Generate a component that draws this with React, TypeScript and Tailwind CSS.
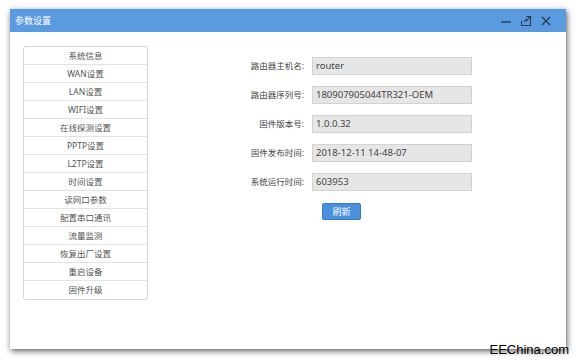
import React from 'react';

const menuItems = [
    '系统信息', 'WAN设置', 'LAN设置', 'WIFI设置', '在线探测设置', 'PPTP设置', 'L2TP设置',
    '时间设置', '读网口参数', '配置串口通讯', '流量监测', '恢复出厂设置', '重启设备', '固件升级',
];

const fields = [
    { label: '路由器主机名:', value: 'router' },
    { label: '路由器序列号:', value: '180907905044TR321-OEM' },
    { label: '固件版本号:', value: '1.0.0.32' },
    { label: '固件发布时间:', value: '2018-12-11 14-48-07' },
    { label: '系统运行时间:', value: '603953' },
];

const font = { fontFamily: '"Noto Sans", "Noto Sans CJK SC", sans-serif' };

export default function App() {
    return (
        <div className="relative w-[576px] h-[361px] bg-white overflow-hidden" style={font}>
            <div className="absolute left-[10px] top-[9px] w-[556px] h-[340px] bg-white shadow-[1px_2px_6px_rgba(0,0,0,0.65)] flex flex-col">
                {/* title bar */}
                <div className="h-[23px] bg-[#5a9ae0] flex items-center justify-between pl-[5px] pr-[14px]">
                    <span className="text-white text-[9px] leading-none">参数设置</span>
                    <div className="flex items-center gap-[8px]">
                        <svg width="12" height="12" viewBox="0 0 12 12">
                            <path d="M1 7h10" stroke="#2f3b4a" strokeWidth="1.4" />
                        </svg>
                        <svg width="12" height="12" viewBox="0 0 12 12" fill="none" stroke="#2f3b4a" strokeWidth="1.1">
                            <path d="M6 1.5h4.5v9h-9V6" />
                            <path d="M10.5 1.5L6 6" />
                            <path d="M6 3.5V6H3.5" />
                        </svg>
                        <svg width="12" height="12" viewBox="0 0 12 12">
                            <path d="M2 2l8 8M10 2l-8 8" stroke="#2f3b4a" strokeWidth="1.3" />
                        </svg>
                    </div>
                </div>

                <div className="flex flex-1">
                    {/* side menu */}
                    <div className="ml-[13px] mt-[14px] w-[125px] self-start border border-[#d6d6d6] rounded-[3px] bg-white">
                        {menuItems.map((item, i) => (
                            <div
                                key={item}
                                className={`h-[18px] pt-[1px] flex items-center justify-center text-[8.5px] text-[#555] ${i < menuItems.length - 1 ? 'border-b border-[#e2e2e2]' : ''}`}
                            >
                                {item}
                            </div>
                        ))}
                    </div>

                    {/* info form */}
                    <div className="ml-[88px] mt-[25px] flex flex-col gap-[11px]">
                        {fields.map((f) => (
                            <div key={f.label} className="flex items-center">
                                <span className="w-[70px] text-right text-[8.5px] text-[#444] pr-[2px]">{f.label}</span>
                                <div className="ml-[6px] w-[160px] h-[18px] bg-[#e6e6e6] border border-[#d2d2d2] flex items-center pl-[3px] text-[9.5px] text-[#444]">
                                    {f.value}
                                </div>
                            </div>
                        ))}
                        <div className="flex pl-[86px] mt-[1px]">
                            <button className="w-[39px] h-[17px] rounded-[2px] bg-[#4a90dc] border border-[#3a78bf] text-white text-[9px] leading-none">
                                刷新
                            </button>
                        </div>
                    </div>
                </div>
            </div>

            <span className="absolute right-[7px] bottom-[5px] text-[13px] leading-none text-black" style={{ fontFamily: '"Liberation Sans", sans-serif' }}>
                EEChina.com
            </span>
        </div>
    );
}
